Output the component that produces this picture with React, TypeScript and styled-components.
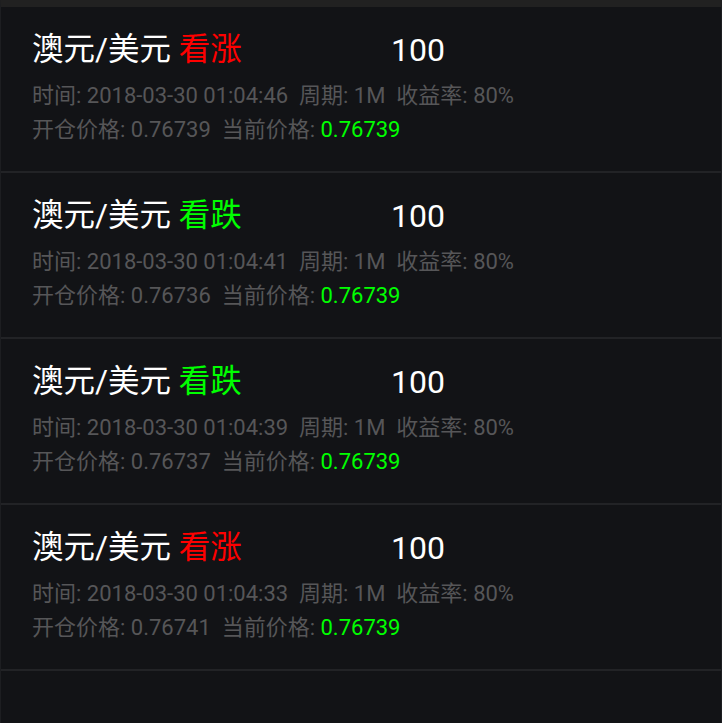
import React from 'react';
import styled, { createGlobalStyle } from 'styled-components';

const GlobalStyle = createGlobalStyle`
  html, body {
    margin: 0;
    padding: 0;
    background: #121316;
  }
  body {
    font-family: Roboto, "Noto Sans CJK SC", sans-serif;
  }
`;

const Page = styled.div`
  width: 722px;
  height: 723px;
  box-sizing: border-box;
  background: #121316;
  border-top: 7px solid #212121;
  border-left: 1px solid #1d1e21;
  border-right: 1px solid #1d1e21;
  overflow: hidden;
`;

const List = styled.ul`
  margin: 0;
  padding: 0;
  list-style: none;
`;

const Row = styled.li`
  padding: 23px 0 24px 31px;
  border-bottom: 2px solid #222326;
`;

const TitleLine = styled.div`
  display: grid;
  grid-template-columns: 359px auto;
  align-items: center;
  height: 40px;
  margin-bottom: 9px;
  font-size: 31.5px;
  line-height: 40px;
  color: #ffffff;
`;

const Pair = styled.span`
  white-space: nowrap;
`;

const Direction = styled.span<{ $up: boolean }>`
  color: ${(p) => (p.$up ? '#ff0000' : '#00ff00')};
`;

const Amount = styled.span`
  color: #ffffff;
  font-size: 32px;
`;

const InfoLine = styled.div`
  font-size: 22px;
  line-height: 34px;
  color: #565658;
  white-space: pre;
`;

const Current = styled.span`
  color: #00ff00;
`;

type Order = {
  up: boolean;
  time: string;
  open: string;
};

const orders: Order[] = [
  { up: true, time: '2018-03-30 01:04:46', open: '0.76739' },
  { up: false, time: '2018-03-30 01:04:41', open: '0.76736' },
  { up: false, time: '2018-03-30 01:04:39', open: '0.76737' },
  { up: true, time: '2018-03-30 01:04:33', open: '0.76741' },
];

export default function App() {
  return (
    <>
      <GlobalStyle />
      <Page>
        <List>
          {orders.map((o, i) => (
            <Row key={i}>
              <TitleLine>
                <Pair>
                  澳元/美元 <Direction $up={o.up}>{o.up ? '看涨' : '看跌'}</Direction>
                </Pair>
                <Amount>100</Amount>
              </TitleLine>
              <InfoLine>{`时间: ${o.time}  周期: 1M  收益率: 80%`}</InfoLine>
              <InfoLine>
                {`开仓价格: ${o.open}  当前价格: `}
                <Current>0.76739</Current>
              </InfoLine>
            </Row>
          ))}
        </List>
      </Page>
    </>
  );
}
